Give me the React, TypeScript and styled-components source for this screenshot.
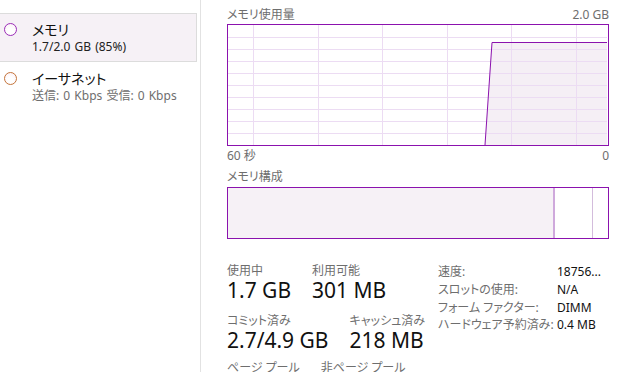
import styled, { createGlobalStyle } from "styled-components";

const GlobalStyle = createGlobalStyle`
  html, body {
    margin: 0;
    padding: 0;
    background: #fff;
    overflow: hidden;
  }
  body {
    font-family: "Noto Sans", "Noto Sans CJK JP", sans-serif;
    font-feature-settings: "palt";
    color: #1a1a1a;
  }
`;

const PURPLE = "#8b12ae";

const Window = styled.div`
  display: flex;
  width: 627px;
  height: 372px;
  overflow: hidden;
`;

const Sidebar = styled.nav`
  width: 201px;
  flex-shrink: 0;
  border-right: 1px solid #e2e2e2;
  padding-top: 13px;
  box-sizing: border-box;
`;

const Item = styled.div<{ $selected?: boolean }>`
  display: flex;
  height: 49px;
  margin-right: 3px;
  box-sizing: border-box;
  padding: 7px 0 0 4px;
  gap: 15px;
  background: ${(p) => (p.$selected ? "#f6f1f6" : "transparent")};
  border: 1px solid ${(p) => (p.$selected ? "#dcdcdc" : "transparent")};
  border-left: none;
`;

const Dot = styled.span<{ $color: string }>`
  width: 13px;
  height: 13px;
  margin-top: 2px;
  flex-shrink: 0;
  border-radius: 50%;
  box-sizing: border-box;
  border: 1.5px solid ${(p) => p.$color};
  background: radial-gradient(circle at 50% 65%, #fff 30%, #fbeff5 100%);
`;

const ItemText = styled.div`
  display: flex;
  flex-direction: column;
`;

const ItemName = styled.span`
  font-size: 14px;
  line-height: 18px;
  color: #111;
`;

const ItemSub = styled.span<{ $muted?: boolean }>`
  font-size: 12px;
  line-height: 16px;
  color: ${(p) => (p.$muted ? "#6e6e6e" : "#222")};
  white-space: nowrap;
  word-spacing: 1px;
`;

const Main = styled.main`
  flex: 1;
  padding: 7px 18px 0 26px;
  display: flex;
  flex-direction: column;
  & > * {
    flex-shrink: 0;
  }
`;

const CaptionRow = styled.div<{ $gap?: number }>`
  display: flex;
  justify-content: space-between;
  font-size: 12px;
  line-height: 16px;
  color: #6e6e6e;
  margin-top: ${(p) => p.$gap ?? 0}px;
`;

const GraphBox = styled.div`
  margin-top: 1px;
  height: 122px;
  border: 1px solid ${PURPLE};
  box-sizing: border-box;
  svg {
    display: block;
  }
`;

const CompBar = styled.div`
  margin-top: 2px;
  height: 52px;
  border: 1px solid ${PURPLE};
  box-sizing: border-box;
  display: flex;
`;

const CompSeg = styled.div<{ $w: number; $bg: string }>`
  width: ${(p) => p.$w}px;
  flex-shrink: 0;
  background: ${(p) => p.$bg};
`;

const Stats = styled.section`
  display: flex;
  margin-top: 24px;
`;

const LeftStats = styled.div`
  width: 211px;
  flex-shrink: 0;
  display: flex;
  flex-direction: column;
`;

const StatRow = styled.div<{ $top?: number }>`
  display: flex;
  gap: 21px;
  margin-top: ${(p) => p.$top ?? 0}px;
`;

const Stat = styled.div`
  display: flex;
  flex-direction: column;
  white-space: nowrap;
`;

const StatLabel = styled.span`
  font-size: 12px;
  line-height: 16px;
  color: #6e6e6e;
`;

const StatValue = styled.span`
  font-size: 21px;
  line-height: 22px;
  color: #111;
`;

const Specs = styled.dl`
  margin: 0;
  display: grid;
  grid-template-columns: 119px auto;
  grid-auto-rows: 17.8px;
  font-size: 12px;
  line-height: 17.8px;
  white-space: nowrap;
  dt {
    color: #6e6e6e;
  }
  dd {
    margin: 0;
    color: #111;
  }
`;

function UsageGraph() {
  const w = 379;
  const h = 120;
  const rows = Array.from({ length: 9 }, (_, i) => (i + 1) * 12);
  const cols = [25, 89.6, 154.2, 218.8, 283.4, 348];
  return (
    <svg width={w} height={h} viewBox={`0 0 ${w} ${h}`}>
      <polygon points={`257,${h} 264,17 ${w},17 ${w},${h}`} fill="#f5eff5" />
      {rows.map((y) => (
        <line key={y} x1={0} x2={w} y1={y + 0.5} y2={y + 0.5} stroke="#ecdcf3" strokeWidth={1} />
      ))}
      {cols.map((x) => (
        <line key={x} x1={Math.round(x) + 0.5} x2={Math.round(x) + 0.5} y1={0} y2={h} stroke="#ecdcf3" strokeWidth={1} />
      ))}
      <polyline points={`257,${h} 264,17.5 ${w},17.5`} fill="none" stroke={PURPLE} strokeWidth={1} />
    </svg>
  );
}

export default function App() {
  return (
    <Window>
      <GlobalStyle />
      <Sidebar>
        <Item $selected>
          <Dot $color="#9b2db8" />
          <ItemText>
            <ItemName>メモリ</ItemName>
            <ItemSub>1.7/2.0 GB (85%)</ItemSub>
          </ItemText>
        </Item>
        <Item>
          <Dot $color="#c4743a" />
          <ItemText>
            <ItemName>イーサネット</ItemName>
            <ItemSub $muted>送信: 0 Kbps 受信: 0 Kbps</ItemSub>
          </ItemText>
        </Item>
      </Sidebar>
      <Main>
        <CaptionRow>
          <span>メモリ使用量</span>
          <span>2.0 GB</span>
        </CaptionRow>
        <GraphBox>
          <UsageGraph />
        </GraphBox>
        <CaptionRow $gap={2}>
          <span>60 秒</span>
          <span>0</span>
        </CaptionRow>
        <CaptionRow $gap={5}>
          <span>メモリ構成</span>
        </CaptionRow>
        <CompBar>
          <CompSeg $w={325} $bg="#f6f1f6" />
          <CompSeg $w={2} $bg="#cfa9dc" />
          <CompSeg $w={37} $bg="#fff" />
          <CompSeg $w={1} $bg="#d3bcdc" />
          <CompSeg $w={14} $bg="#fff" />
        </CompBar>
        <Stats>
          <LeftStats>
            <StatRow>
              <Stat>
                <StatLabel>使用中</StatLabel>
                <StatValue>1.7 GB</StatValue>
              </Stat>
              <Stat>
                <StatLabel>利用可能</StatLabel>
                <StatValue>301 MB</StatValue>
              </Stat>
            </StatRow>
            <StatRow $top={12}>
              <Stat>
                <StatLabel>コミット済み</StatLabel>
                <StatValue>2.7/4.9 GB</StatValue>
              </Stat>
              <Stat>
                <StatLabel>キャッシュ済み</StatLabel>
                <StatValue>218 MB</StatValue>
              </Stat>
            </StatRow>
            <StatRow $top={9}>
              <Stat>
                <StatLabel>ページ プール</StatLabel>
              </Stat>
              <Stat>
                <StatLabel>非ページ プール</StatLabel>
              </Stat>
            </StatRow>
          </LeftStats>
          <Specs>
            <dt>速度:</dt>
            <dd>18756...</dd>
            <dt>スロットの使用:</dt>
            <dd>N/A</dd>
            <dt>フォーム ファクター:</dt>
            <dd>DIMM</dd>
            <dt>ハードウェア予約済み:</dt>
            <dd>0.4 MB</dd>
          </Specs>
        </Stats>
      </Main>
    </Window>
  );
}
